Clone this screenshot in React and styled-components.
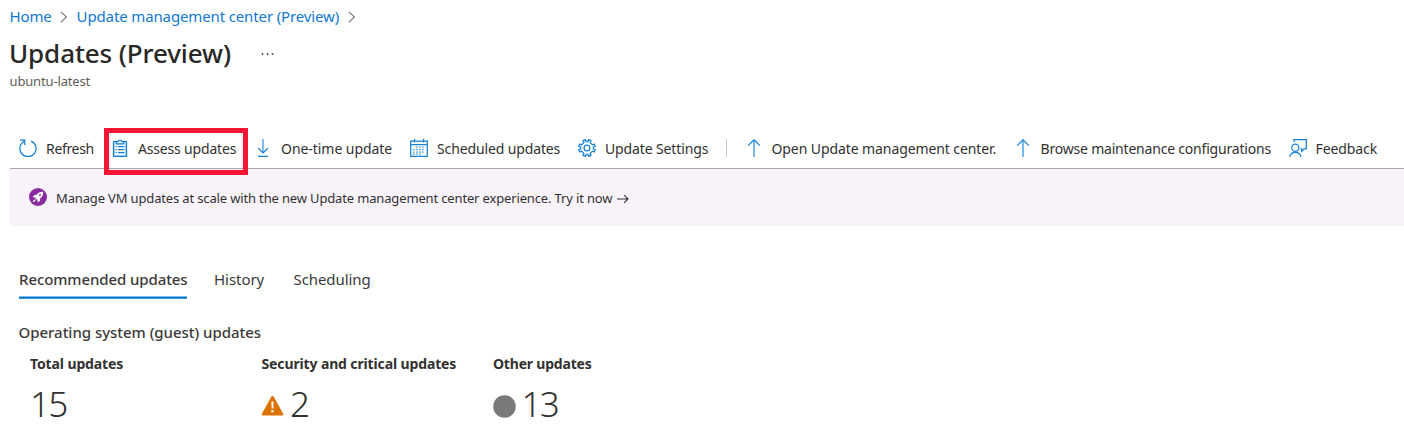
import React from "react";
import styled, { createGlobalStyle } from "styled-components";

const GlobalStyle = createGlobalStyle`
  * { box-sizing: border-box; }
  body {
    margin: 0;
    background: #fff;
    color: #323130;
    font-family: "Noto Sans", "Open Sans", sans-serif;
    overflow: hidden;
  }
`;

const Page = styled.div`
  width: 1404px;
  height: 430px;
  padding: 6px 0 0 10px;
  overflow: hidden;
`;

const Breadcrumb = styled.nav`
  display: flex;
  align-items: center;
  height: 20px;
  margin-left: -0.5px;
`;

const Crumb = styled.a`
  color: #0f78d4;
  font-size: 15px;
  line-height: 20px;
  letter-spacing: ${(p) => p.$spacing}px;
  white-space: nowrap;
`;

const Chevron = styled.svg`
  width: 8px;
  height: 12px;
  margin: 1px 8.5px 0 8.5px;
  flex: none;
`;

const TitleRow = styled.header`
  display: flex;
  align-items: center;
  height: 36px;
  margin: 9px 0 0 -1px;
`;

const Title = styled.h1`
  margin: 0;
  font-size: 26px;
  font-weight: 500;
  line-height: 36px;
  letter-spacing: ${(p) => p.$spacing}px;
  color: #292827;
`;

const MoreDots = styled.svg`
  width: 14px;
  height: 4px;
  margin: 2px 0 0 29px;
`;

const Subtitle = styled.div`
  margin-top: 1px;
  height: 18px;
  margin-left: -0.5px;
  font-size: 13px;
  line-height: 18px;
  letter-spacing: -0.15px;
  color: #605e5c;
`;

const Toolbar = styled.div`
  display: flex;
  align-items: center;
  gap: 17.5px;
  height: 41px;
  margin-top: 38px;
  padding: 0 0 0 9px;
  border-bottom: 1px solid #a9a9a9;
`;

const ToolButton = styled.div`
  position: relative;
  display: flex;
  align-items: center;
  gap: 9px;
  flex: none;
  height: 40px;
`;

const ToolIcon = styled.svg`
  width: 18px;
  height: 18px;
  flex: none;
  fill: none;
  stroke: #1580d8;
  stroke-width: 1.25;
`;

const ToolLabel = styled.span`
  width: ${(p) => p.$width}px;
  padding-top: 2px;
  font-size: 14px;
  line-height: 20px;
  letter-spacing: ${(p) => p.$spacing}px;
  white-space: nowrap;
`;

const Highlight = styled.div`
  position: absolute;
  left: -7px;
  top: 0;
  width: 144px;
  height: 47px;
  border: 5px solid #f31635;
`;

const Separator = styled.div`
  width: 1px;
  height: 18px;
  background: #c8c6c4;
`;

const Banner = styled.div`
  display: flex;
  align-items: center;
  height: 57px;
  padding-left: 19px;
  background: #f8f3fb;
`;

const BannerIcon = styled.svg`
  width: 18px;
  height: 18px;
  margin: 0 9px 1px 0;
`;

const BannerText = styled.span`
  font-size: 13px;
  line-height: 18px;
  letter-spacing: -0.15px;
  white-space: nowrap;
`;

const BannerArrow = styled.svg`
  width: 12px;
  height: 10px;
  margin: 3px 0 0 4.5px;
`;

const Tabs = styled.div`
  display: flex;
  gap: 27px;
  height: 32px;
  margin: 41px 0 0 9px;
`;

const Tab = styled.div`
  width: ${(p) => p.$width}px;
  height: 32px;
  padding-top: 1px;
  font-size: 15px;
  font-weight: ${(p) => (p.$active ? 500 : 400)};
  line-height: 22px;
  letter-spacing: ${(p) => p.$spacing}px;
  white-space: nowrap;
  color: #3b3a39;
  background: ${(p) =>
    p.$active
      ? "linear-gradient(#82bfee 0 1px, #0b6fca 1px 2px, #389ae4 2px) bottom / 100% 3px no-repeat"
      : "none"};
`;

const SectionTitle = styled.h2`
  margin: 22px 0 0 8.5px;
  font-size: 15px;
  font-weight: 500;
  line-height: 22px;
  letter-spacing: -0.03px;
  color: #3b3a39;
`;

const Stats = styled.div`
  display: grid;
  grid-template-columns: 231.5px 231.5px 200px;
  margin: 11px 0 0 20px;
`;

const StatLabel = styled.div`
  font-size: 14px;
  font-weight: 700;
  line-height: 20px;
  letter-spacing: ${(p) => p.$spacing}px;
  white-space: nowrap;
`;

const StatValue = styled.div`
  display: flex;
  align-items: center;
  gap: 6px;
  height: 48px;
  margin-top: 6px;
  font-size: 35px;
  font-weight: 300;
  line-height: 48px;
  letter-spacing: -1.8px;
`;

const StatIcon = styled.svg`
  width: 23px;
  height: 23px;
  margin-top: ${(p) => p.$top}px;
  margin-left: -0.5px;
`;

const icons = {
  refresh: (
    <>
      <path d="M12.1 2.1A8.1 8.1 0 1 1 5.4 2.3" />
      <path d="M1 1.1h4.8v4.8" />
    </>
  ),
  assess: (
    <>
      <path d="M3.6 4.6h10.8v11.8H3.6z" stroke="#b5daf6" strokeWidth="1" />
      <path d="M5.5 2.6h-3v14.8h13V2.6h-3" />
      <path d="M5.4 4.8V2.5h1.9a1.75 1.75 0 0 1 3.4 0h1.9v2.3z" fill="#fff" />
      <path d="M4.5 7.5h1.2M7 7.5h6.5M4.5 10.5h1.2M7 10.5h6.5M4.5 13.5h1.2M7 13.5h6.5" />
    </>
  ),
  download: (
    <>
      <path d="M9 0v14" stroke="#69b1ec" strokeWidth="1.7" />
      <path d="M4.2 9.3 9 14l4.8-4.7M4 17.4h10" />
    </>
  ),
  calendar: (
    <>
      <path d="M.7 2h16.6v15.3H.7zM.7 5.5h16.6M4.5 0v3.5M13.5 0v3.5" />
      <path d="M6.2 8h9M3.2 10.5h12M3.2 13h12M3.2 15h9" strokeDasharray="1.3 1.7" />
    </>
  ),
  settings: (
    <>
      <circle cx="9" cy="9" r="2.9" />
      <path
        d="M7.6.7 8 2.7 10 2.7 10.4.7 13 1.7 12.1 3.5 14.5 5.9 16.3 5 17.3 7.6 15.3 8 15.3 10 17.3 10.4 16.3 13 14.5 12.1 12.1 14.5 13 16.3 10.4 17.3 10 15.3 8 15.3 7.6 17.3 5 16.3 5.9 14.5 3.5 12.1 1.7 13 .7 10.4 2.7 10 2.7 8 .7 7.6 1.7 5 3.5 5.9 5.9 3.5 5 1.7z"
        strokeLinejoin="round"
      />
    </>
  ),
  up: (
    <>
      <path d="M9 1v17" stroke="#4aa0e6" strokeWidth="1.5" />
      <path d="M3.2 6.6 9 .8l5.8 5.8" />
    </>
  ),
  feedback: (
    <>
      <circle cx="6.3" cy="8.8" r="3.6" />
      <path d="M.7 18a5.7 5.7 0 0 1 11.2 0" />
      <path d="M5 3V.7h12.3v9.1h-1.9l-2.7 2.5V9.8h-1.2" />
    </>
  ),
};

const tools = [
  { icon: "refresh", label: "Refresh", width: 47.5, spacing: -0.33 },
  { icon: "assess", label: "Assess updates", width: 98.5, spacing: -0.18 },
  { icon: "download", label: "One-time update", width: 111.5, spacing: -0.05 },
  { icon: "calendar", label: "Scheduled updates", width: 123.5, spacing: -0.13 },
  { icon: "settings", label: "Update Settings", width: 103.5, spacing: -0.13 },
];

const highlightedTool = "assess";

const links = [
  { icon: "up", label: "Open Update management center.", width: 224.5, spacing: -0.09 },
  { icon: "up", label: "Browse maintenance configurations", width: 230.5, spacing: -0.2 },
  { icon: "feedback", label: "Feedback", width: 62, spacing: -0.1 },
];

const tabs = [
  { label: "Recommended updates", width: 168, spacing: -0.1, active: true },
  { label: "History", width: 52.5, spacing: -0.05 },
  { label: "Scheduling", width: 80, spacing: -0.08 },
];

function Tool({ icon, label, width, spacing }) {
  return (
    <ToolButton>
      <ToolIcon viewBox="0 0 18 18">{icons[icon]}</ToolIcon>
      <ToolLabel $width={width} $spacing={spacing}>{label}</ToolLabel>
      {icon === highlightedTool && <Highlight />}
    </ToolButton>
  );
}

function CrumbChevron() {
  return (
    <Chevron viewBox="0 0 8 12" fill="none" stroke="#777" strokeWidth="1.1">
      <path d="M.9.8 6.5 6 .9 11.2" />
    </Chevron>
  );
}

export default function App() {
  return (
    <Page>
      <GlobalStyle />
      <Breadcrumb>
        <Crumb $spacing={-0.15}>Home</Crumb>
        <CrumbChevron />
        <Crumb $spacing={-0.13}>Update management center (Preview)</Crumb>
        <CrumbChevron />
      </Breadcrumb>
      <TitleRow>
        <Title $spacing={-0.1}>Updates (Preview)</Title>
        <MoreDots viewBox="0 0 14 4" fill="#444">
          <circle cx="2.5" cy="2" r=".9" />
          <circle cx="7.5" cy="2" r=".9" />
          <circle cx="12.5" cy="2" r=".9" />
        </MoreDots>
      </TitleRow>
      <Subtitle>ubuntu-latest</Subtitle>
      <Toolbar>
        {tools.map((t) => <Tool key={t.label} {...t} />)}
        <Separator />
        {links.map((t) => <Tool key={t.label} {...t} />)}
      </Toolbar>
      <Banner>
        <BannerIcon viewBox="0 0 18 18">
          <circle cx="9" cy="9" r="9" fill="#872b9f" />
          <path
            d="M14.2 3.8c-2.9-.1-4.9.8-6.5 2.9l-2.4.3-1.7 2.2 2.2.2 2.8 2.8.2 2.2 2.2-1.700.3-2.4C13.4 8.7 14.3 6.7 14.2 3.8z"
            fill="#fff"
          />
          <path d="m4.3 13.7 2.2-2.2" stroke="#fff" strokeWidth="1.3" />
          <circle cx="11" cy="7" r="1" fill="#872b9f" />
        </BannerIcon>
        <BannerText>
          Manage VM updates at scale with the new Update management center experience. Try it now
        </BannerText>
        <BannerArrow viewBox="0 0 12 10" fill="none" stroke="#323130" strokeWidth="1.1">
          <path d="M0 5h11M7.2 1.2 11 5 7.2 8.8" />
        </BannerArrow>
      </Banner>
      <Tabs>
        {tabs.map((t) => (
          <Tab key={t.label} $active={t.active} $width={t.width} $spacing={t.spacing}>{t.label}</Tab>
        ))}
      </Tabs>
      <SectionTitle>Operating system (guest) updates</SectionTitle>
      <Stats>
        <div>
          <StatLabel $spacing={-0.12}>Total updates</StatLabel>
          <StatValue>15</StatValue>
        </div>
        <div>
          <StatLabel $spacing={-0.13}>Security and critical updates</StatLabel>
          <StatValue>
            <StatIcon $top={2} viewBox="0 0 23 23">
              <path
                d="M10.2 2.7c.6-1 2-1 2.6 0l9.3 17c.5.9-.1 1.8-1.1 1.8H2c-1 0-1.600-.9-1.100-1.800z"
                fill="#dc7200"
              />
              <path d="M10.4 7.5h2.2l-.3 7h-1.6z" fill="#fff" />
              <circle cx="11.5" cy="17.2" r="1.3" fill="#fff" />
            </StatIcon>
            2
          </StatValue>
        </div>
        <div>
          <StatLabel $spacing={-0.2}>Other updates</StatLabel>
          <StatValue>
            <StatIcon $top={4} viewBox="0 0 23 23">
              <circle cx="11.5" cy="11.5" r="11.3" fill="#7a7a7a" />
            </StatIcon>
            13
          </StatValue>
        </div>
      </Stats>
    </Page>
  );
}
